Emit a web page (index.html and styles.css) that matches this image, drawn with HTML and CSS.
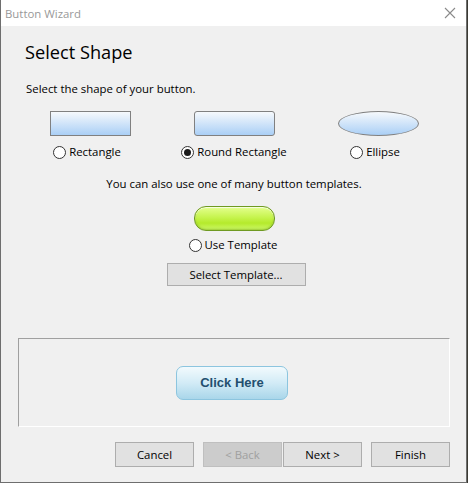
FILE: index.html
```html
<!DOCTYPE html>
<html lang="en">
<head>
    <meta charset="UTF-8">
    <title>Button Wizard</title>
    <link rel="stylesheet" href="styles.css">
</head>
<body>
    <div class="window">
        <div class="titlebar">
            <span class="title">Button Wizard</span>
            <svg class="close" width="12" height="12" viewBox="0 0 12 12">
                <path d="M1 1 L11 11 M11 1 L1 11" stroke="#8a8a8a" stroke-width="1.1" fill="none" />
            </svg>
        </div>
        <div class="content">
            <h1 class="heading">Select Shape</h1>
            <p class="intro">Select the shape of your button.</p>

            <div class="shapes">
                <div class="shape-col">
                    <div class="shape rect"></div>
                    <label class="radio"><span class="dot"></span>Rectangle</label>
                </div>
                <div class="shape-col">
                    <div class="shape round"></div>
                    <label class="radio"><span class="dot checked"></span>Round Rectangle</label>
                </div>
                <div class="shape-col">
                    <div class="shape ellipse"></div>
                    <label class="radio"><span class="dot"></span>Ellipse</label>
                </div>
            </div>

            <p class="templates-note">You can also use one of many button templates.</p>
            <div class="template">
                <div class="pill"></div>
                <label class="radio"><span class="dot"></span>Use Template</label>
                <button class="btn select-template">Select Template...</button>
            </div>

            <div class="preview">
                <button class="click-here">Click Here</button>
            </div>

            <div class="actions">
                <button class="btn">Cancel</button>
                <button class="btn disabled">&lt; Back</button>
                <button class="btn next">Next &gt;</button>
                <button class="btn finish">Finish</button>
            </div>
        </div>
    </div>
</body>
</html>
```

FILE: styles.css
```css
body {
    margin: 0;
    padding: 0;
    background-color: #3b3a33;
    font-family: "Open Sans", "Noto Sans", sans-serif;
    font-size: 11.4px;
    color: #000;
}
.window {
    width: 465px;
    height: 482px;
    background-color: #f0f0f0;
    border: 1px solid #6e6e6e;
    border-top: none;
    display: flex;
    flex-direction: column;
}
.titlebar {
    height: 26px;
    background-color: #fff;
    display: flex;
    align-items: center;
    justify-content: space-between;
    padding: 0 10px 0 4px;
}
.title {
    color: #999;
    font-size: 11.4px;
}
.content {
    padding: 0 16px 0 17px;
    display: flex;
    flex-direction: column;
}
.heading {
    margin: 14px 0 0 7px;
    font-size: 18.2px;
    font-weight: normal;
    line-height: 25px;
}
.intro {
    margin: 16px 0 0 8px;
    line-height: 16px;
}
.shapes {
    display: grid;
    grid-template-columns: repeat(3, 1fr);
    margin-top: 14px;
}
.shape-col {
    display: flex;
    flex-direction: column;
    align-items: center;
}
.shape {
    width: 79px;
    height: 23px;
    border: 1px solid #808080;
    background: linear-gradient(#f6f9fc, #aacff6);
}
.round {
    border-radius: 3px;
}
.ellipse {
    border-radius: 50%;
}
.radio {
    display: flex;
    align-items: center;
    gap: 3px;
    margin-top: 8px;
    line-height: 16px;
}
.shape-col:first-child .radio,
.shape-col:last-child .radio {
    margin-right: 6px;
}
.dot {
    width: 11px;
    height: 11px;
    border: 1px solid #333;
    border-radius: 50%;
    background-color: #fff;
    display: flex;
    align-items: center;
    justify-content: center;
}
.dot.checked::after {
    content: "";
    width: 7px;
    height: 7px;
    border-radius: 50%;
    background-color: #1a1a1a;
}
.templates-note {
    margin: 16px 0 0;
    text-align: center;
    line-height: 16px;
}
.template {
    display: flex;
    flex-direction: column;
    align-items: center;
    margin-top: 14px;
}
.pill {
    width: 79px;
    height: 23px;
    border: 1px solid #6f9a22;
    border-radius: 12px;
    background: linear-gradient(#e4ff8e, #c6f44e 45%, #b5ea2c 70%, #cdf86a);
    box-shadow: inset 0 1px 1px rgba(255, 255, 255, 0.8), inset 0 -1px 2px rgba(120, 170, 20, 0.6);
}
.template .radio {
    margin-top: 6px;
    margin-right: 2px;
}
.btn {
    font-family: inherit;
    font-size: 11.4px;
    color: #000;
    background-color: #e1e1e1;
    border: 1px solid #adadad;
    padding: 0;
    height: 25px;
    width: 79px;
}
.select-template {
    width: 139px;
    height: 23px;
    margin: 10px 0 0 4px;
}
.preview {
    margin-top: 52px;
    height: 87px;
    border-top: 1px solid #a0a0a0;
    border-left: 1px solid #a0a0a0;
    border-bottom: 1px solid #fff;
    border-right: 1px solid #fff;
    display: flex;
    align-items: center;
    justify-content: center;
}
.click-here {
    width: 112px;
    height: 34px;
    margin-left: -4px;
    border: 1px solid #8cc5df;
    border-radius: 7px;
    background: linear-gradient(#f2fafd, #d2ebf6 50%, #a9d6ea);
    color: #234f6f;
    font-family: "Liberation Sans", Arial, sans-serif;
    font-weight: bold;
    font-size: 13px;
}
.actions {
    display: flex;
    justify-content: flex-end;
    margin-top: 15px;
}
.actions .btn + .btn {
    margin-left: 9px;
}
.actions .next {
    margin-left: 1px !important;
}
.disabled {
    background-color: #cccccc;
    border-color: #bfbfbf;
    color: #a0a0a0;
}
```
